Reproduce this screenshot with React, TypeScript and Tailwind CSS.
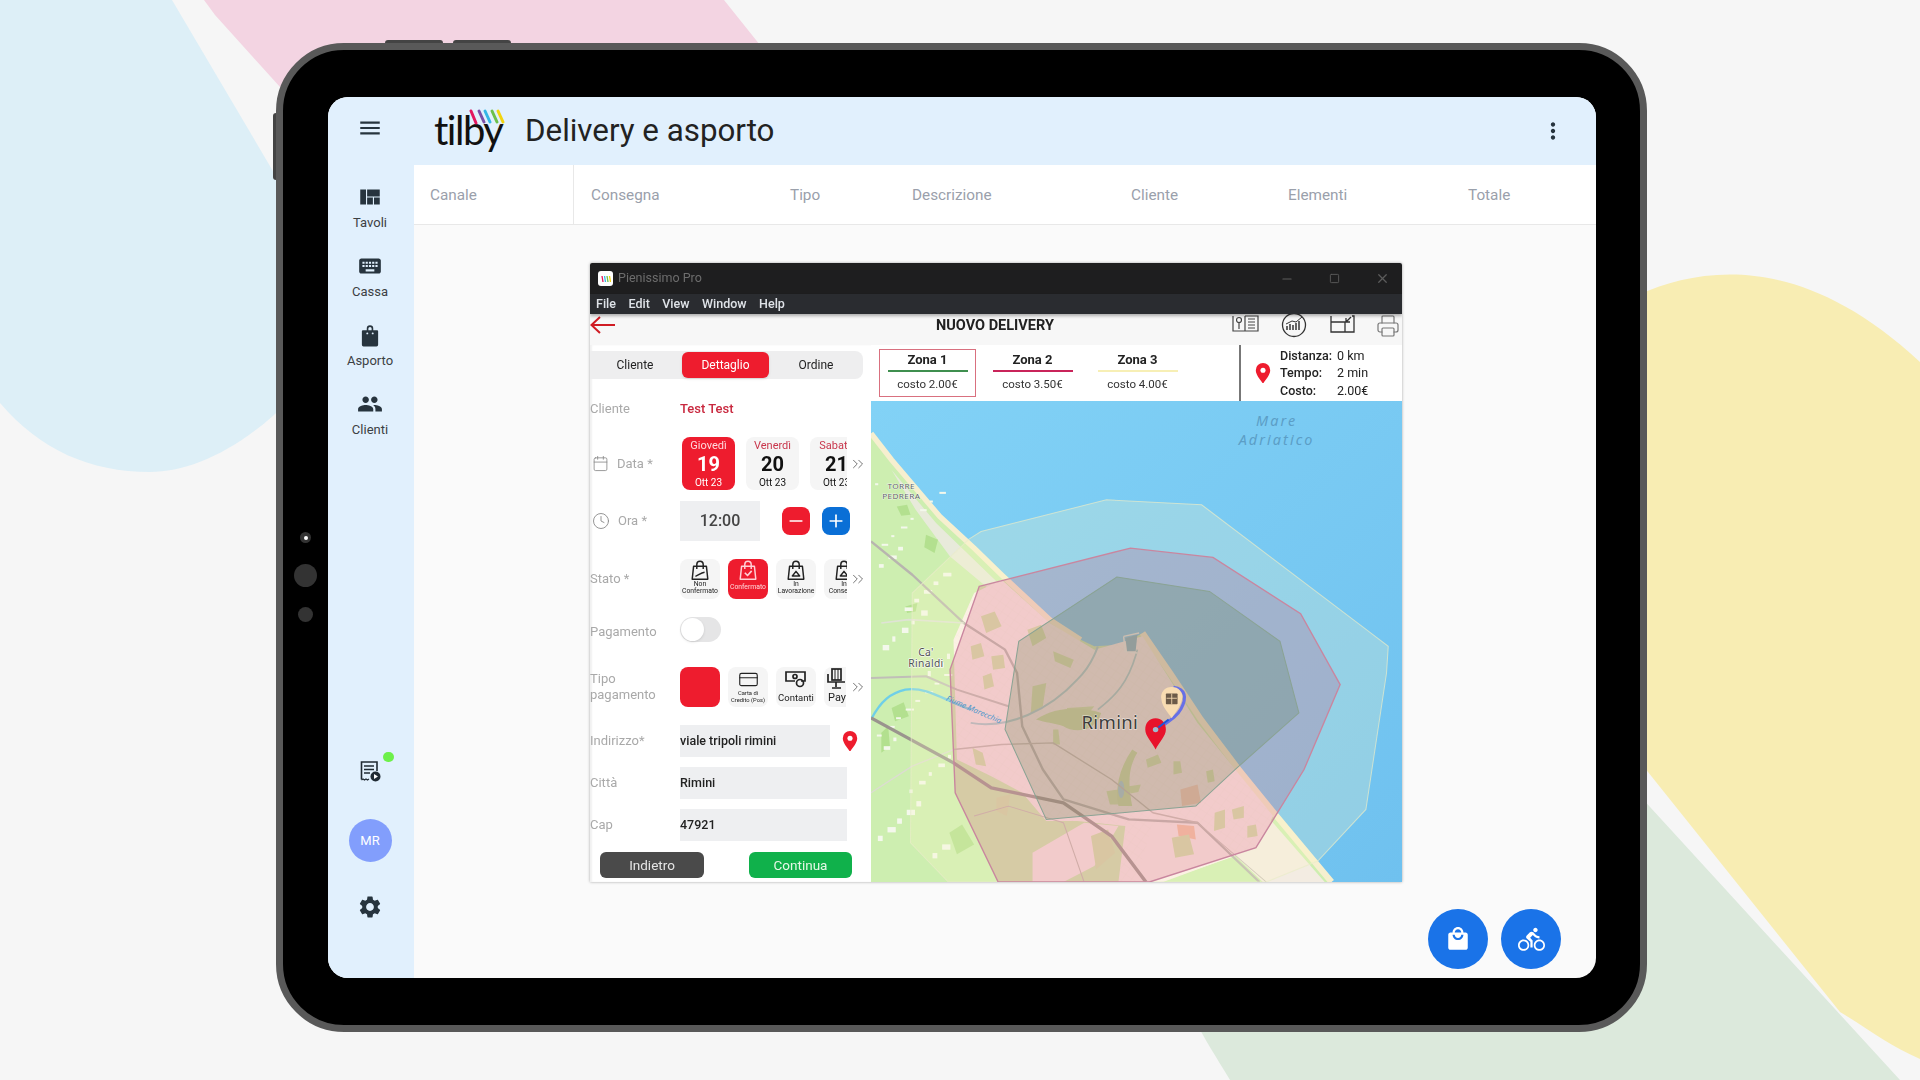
// App.tsx
import { Calendar, Clock, ChevronsRight, CreditCard, Printer, Minus, Plus, X, Square } from 'lucide-react'
import { MdMenu, MdMoreVert, MdViewQuilt, MdKeyboard, MdPeople, MdSettings, MdLocalMall, MdDirectionsBike } from 'react-icons/md'

const columns = [
  { label: 'Consegna', width: 'w-[216px]', pad: 'pl-[17px]' },
  { label: 'Tipo', width: 'w-[122px]', pad: '' },
  { label: 'Descrizione', width: 'w-[219px]', pad: '' },
  { label: 'Cliente', width: 'w-[157px]', pad: '' },
  { label: 'Elementi', width: 'w-[180px]', pad: '' },
  { label: 'Totale', width: 'w-[128px]', pad: '' }
]

const dates = [
  { day: 'Giovedì', num: '19', active: true },
  { day: 'Venerdì', num: '20', active: false },
  { day: 'Sabato', num: '21', active: false }
]

const zones = [
  { name: 'Zona 1', cost: 'costo 2.00€', line: 'bg-[#3f8f4f]', box: 'border-[#d9707f]' },
  { name: 'Zona 2', cost: 'costo 3.50€', line: 'bg-[#c9245a]', box: 'border-transparent' },
  { name: 'Zona 3', cost: 'costo 4.00€', line: 'bg-[#f7efb5]', box: 'border-transparent' }
]

const urbanPatches = [
  '320,470 360,455 380,500 335,520',
  '290,560 320,550 330,590 295,600',
  '350,590 385,585 390,625 355,630',
  '455,510 495,495 510,535 470,560',
  '470,680 510,670 500,740 465,760',
  '530,575 590,600 580,625 535,605',
  '570,745 650,740 630,765 575,775',
  '325,650 350,640 358,680 330,690',
  '530,810 545,810 550,855 530,855',
  '800,900 835,885 845,910 805,925',
  '880,905 900,905 905,940 880,945',
  '975,935 995,930 1000,965 980,970',
  '685,995 720,990 735,1035 695,1035',
  '750,980 785,975 778,998 755,1002',
  '1000,1060 1030,1050 1030,1105 998,1115',
  '1050,1050 1085,1040 1085,1075 1055,1080',
  '1095,1100 1120,1095 1125,1130 1095,1135',
  '640,1130 690,1110 710,1180 655,1230',
  '875,1135 925,1125 940,1185 885,1195',
  '365,1015 405,1005 395,1070 365,1055',
  '295,865 325,880 335,920 305,915'
]

// scattered built-up specks on the countryside west of the city
const specks = Array.from({ length: 46 }, (_, i) => ({
  x: 12 + ((i * 67) % 215),
  y: 70 + ((i * 191) % 1120),
  w: 9 + (i % 4) * 5,
  h: 6 + (i % 3) * 5
}))

const fieldPatches = [
  '160,225 195,240 185,280 155,262',
  '75,140 105,135 115,165 88,168',
  '228,1120 265,1095 300,1155 250,1185',
  '60,745 95,728 110,770 70,785',
  '30,820 50,800 55,860 30,880',
  '100,440 135,430 130,455 105,460'
]

function TilbyLogo() {
  return (
    <div className="relative h-[56px] w-[70px]">
      <span className="absolute left-0 top-[2px] font-['Lato',sans-serif] text-[40px] leading-[50px] tracking-[-1.5px] text-[#111]">tilby</span>
      <svg className="absolute left-[35px] top-[6px]" width="36" height="16" viewBox="0 0 36 16" strokeWidth="3" strokeLinecap="round">
        <path d="M2 2l5 12" stroke="#e3175f" />
        <path d="M10 2l5 11" stroke="#7a4fa8" />
        <path d="M16 2l5 11" stroke="#35b6e6" />
        <path d="M23 2l5 11" stroke="#6cc04a" />
        <path d="M29 2l5 11" stroke="#f2d40f" />
      </svg>
    </div>
  )
}

function TakeawayIcon() {
  return (
    <svg width="28" height="28" viewBox="0 0 24 24" fill="#27343e">
      <path d="M5.500 7.500H9V6a3 3 0 0 1 6 0v1.500h3.500a1 1 0 0 1 1 1V21a1.500 1.500 0 0 1-1.500 1.500H6A1.500 1.500 0 0 1 4.500 21V8.500a1 1 0 0 1 1-1zM10.500 7.500h3V6a1.500 1.500 0 0 0-3 0z" fillRule="evenodd" />
      <circle cx="9.500" cy="10.500" r="0.900" fill="#e1f0fd" />
      <circle cx="14.500" cy="10.500" r="0.900" fill="#e1f0fd" />
    </svg>
  )
}

function ReceiptPlayIcon() {
  return (
    <svg width="24" height="24" viewBox="0 0 24 24" fill="none" stroke="#1f2a33" strokeWidth="1.600">
      <path d="M3.500 20.500V3h15.500v9" />
      <path d="M3.500 21l1.500-1 1.500 1 1.500-1 1.500 1 1.500-1" strokeWidth="1.200" />
      <path d="M6 7h10M6 10.500h10M6 14h6" />
      <circle cx="17.500" cy="17.500" r="5" fill="#1f2a33" stroke="none" />
      <path d="M16 15l4 2.500-4 2.500z" fill="#fff" stroke="none" />
    </svg>
  )
}

function BagIcon({ color = '#222', mark }: { color?: string; mark: 'swoosh' | 'check' | 'home' }) {
  return (
    <svg width="22" height="22" viewBox="0 0 24 24" fill="none" stroke={color} strokeWidth="1.600" strokeLinejoin="round">
      <path d="M5 8h14l1.500 14h-17z" />
      <path d="M8.500 11V6a3.500 3.500 0 0 1 7 0v5" />
      {mark === 'swoosh' && <path d="M7 19c3-1 6-4 10-4.500" />}
      {mark === 'check' && <path d="M8.500 15l3 3 4.500-5" strokeWidth="1.800" />}
      {mark === 'home' && <path d="M8 18.500h8l-4-5z" />}
    </svg>
  )
}

function CashIcon() {
  return (
    <svg width="24" height="18" viewBox="0 0 24 18" fill="none" stroke="#222" strokeWidth="1.700">
      <path d="M17 11h4V2H2v9h9" />
      <circle cx="11" cy="6.500" r="2" />
      <circle cx="16" cy="13" r="3.500" />
    </svg>
  )
}

function PayIcon() {
  return (
    <svg width="20" height="22" viewBox="0 0 20 22" fill="none" stroke="#222" strokeWidth="1.700">
      <rect x="6" y="1" width="9" height="11" />
      <path d="M9 1v11M12 1v11" strokeWidth="1" />
      <path d="M2 6v8h17M10 14v5M6 20h9" />
    </svg>
  )
}

function RedPin({ size = 20 }: { size?: number }) {
  return (
    <svg width={size} height={size * 1.3} viewBox="0 0 20 26">
      <path d="M10 0a9 9 0 0 1 9 9c0 6-6 12-9 17-3-5-9-11-9-17a9 9 0 0 1 9-9z" fill="#ee1c2e" />
      <circle cx="10" cy="9" r="3.200" fill="#fff" />
    </svg>
  )
}

function MapView() {
  return (
    <svg className="block" width="531" height="481" viewBox="0 -177 1545 1445" preserveAspectRatio="none">
      <defs>
        <linearGradient id="sea" x1="0" y1="0" x2="1" y2="1">
          <stop offset="0" stopColor="#82d2f6" />
          <stop offset="1" stopColor="#6fc1ef" />
        </linearGradient>
        <pattern id="streets" width="22" height="22" patternUnits="userSpaceOnUse" patternTransform="rotate(35)">
          <path d="M0 0H22M0 0V22" stroke="#b9a3a3" strokeWidth="1" opacity="0.250" />
        </pattern>
      </defs>
      <rect x="0" y="-177" width="1545" height="1445" fill="url(#sea)" />
      {/* land */}
      <polygon points="0,-80 60,0 200,170 300,265 380,345 520,480 610,540 650,560 730,555 790,520 870,640 960,780 1070,930 1180,1070 1340,1268 0,1268" fill="#cdeeb0" />
      <polyline points="0,-80 60,0 200,170 300,265 380,345 520,480 610,540" fill="none" stroke="#f6efcf" strokeWidth="16" />
      <polyline points="790,520 870,640 960,780 1070,930 1180,1070 1340,1268" fill="none" stroke="#f6efcf" strokeWidth="18" />
      <polygon points="60,30 190,190 290,290 370,370 340,385 230,290 130,150" fill="#e8eadb" />
      <polygon points="1060,960 1320,1268 1140,1268 1000,1130 960,1040" fill="#f3ece2" />
      {fieldPatches.map((p) => <polygon key={p} points={p} fill="#b3e08f" />)}
      {specks.map((s) => <rect key={`${s.x}-${s.y}`} x={s.x} y={s.y} width={s.w} height={s.h} fill="#f4f8ec" />)}
      {/* urban area */}
      <polygon points="240,540 300,400 380,360 520,490 650,570 790,530 950,790 1170,1070 1120,1165 850,1268 720,1268 740,1100 600,1085 510,1085 440,1000 350,950 250,900" fill="#fbf0ee" />
      <polygon points="240,540 300,400 380,360 520,490 650,570 790,530 950,790 1170,1070 1120,1165 850,1268 720,1268 740,1100 600,1085 510,1085 440,1000 350,950 250,900" fill="url(#streets)" />
      <polygon points="470,1180 620,1090 720,1100 650,1220 560,1268 470,1268" fill="#fbf0ee" />
      <polygon points="820,1090 1000,1110 1060,1190 840,1268 770,1268" fill="#fbf0ee" />
      <polygon points="900,990 950,975 960,1030 905,1040" fill="#f8cdb8" />
      <polygon points="890,1095 940,1100 945,1140 895,1130" fill="#f8c4a5" />
      {urbanPatches.map((p) => <polygon key={p} points={p} fill="#d3e6ab" />)}
      <path d="M480 780c60-40 130-40 190-20-20 60-80 60-110 40-30-10-50-10-80-20z" fill="#cbe2a2" />
      <path d="M720 1040c-10-50 0-110 40-170l15 10c-30 50-25 100-15 160z" fill="#cbe2a2" />
      {/* water and roads */}
      <path d="M0 780C30 720 60 700 100 690c60-10 110 30 190 60" fill="none" stroke="#6fcfe8" strokeWidth="7" />
      <path d="M290 790C400 810 520 750 600 660c30-30 50-70 60-100" fill="none" stroke="#a7cfd1" strokeWidth="6" />
      <path d="M660 750c50-40 90-80 115-180" fill="none" stroke="#a7cfd1" strokeWidth="5" />
      <path d="M735 530l45-10M735 530l5 45 35 5" fill="none" stroke="#f2f6f2" strokeWidth="4" />
      <polygon points="740,535 775,525 770,575 745,575" fill="#7fb5c7" />
      <ellipse cx="728" cy="990" rx="9" ry="26" fill="#a6d2de" />
      <g fill="none" strokeLinejoin="round">
        <polyline points="0,245 120,345 270,490 390,570 425,640 440,800 500,930 560,1020 750,1080 950,1090 1130,1268" strokeWidth="7" stroke="#b8b5af" />
        <polyline points="0,655 160,650 250,690 400,740" strokeWidth="6" stroke="#c0beb8" />
        <polyline points="240,870 380,855 530,850 700,960 820,1060 950,1090" strokeWidth="4" stroke="#c4bcb4" />
        <polyline points="0,1000 120,920 240,870" strokeWidth="4" stroke="#dcdcd2" />
        <polyline points="30,490 110,480 270,490" strokeWidth="5" stroke="#dfe3d5" />
        <polyline points="300,1070 400,1040 560,1090 620,1268" strokeWidth="3" stroke="#c4bcb4" />
        <polyline points="950,1090 1150,1268" strokeWidth="3" stroke="#c4bcb4" />
        <polyline points="0,775 240,910 350,985 560,1030 700,1130 800,1268" strokeWidth="10" stroke="#9a948e" />
      </g>
      {/* delivery zones */}
      <polygon points="285,238 320,215 685,120 962,135 1505,560 1500,640 1440,1050 1300,1205 1150,1268 225,1268 115,1150 120,400" fill="#fdf7c6" fillOpacity="0.240" stroke="#e9edc9" strokeOpacity="0.700" strokeWidth="3" />
      <polygon points="315,380 755,265 995,293 1250,462 1365,675 1260,930 1120,1165 810,1268 370,1268 245,1000 230,630" fill="#cf3668" fillOpacity="0.200" stroke="#c9869f" strokeWidth="4" />
      <polygon points="715,352 985,395 1190,545 1245,760 1060,930 945,1040 510,1080 390,810 430,545" fill="#4a7a3c" fillOpacity="0.200" stroke="#8aa394" strokeWidth="3" />
      {/* labels */}
      <g fontFamily="'Noto Sans', sans-serif" textAnchor="middle">
        <text x="88" y="88" fontSize="24" fill="#5b5f5f" stroke="#fff" strokeWidth="2" paintOrder="stroke" letterSpacing="1">TORRE</text>
        <text x="88" y="116" fontSize="24" fill="#5b5f5f" stroke="#fff" strokeWidth="2" paintOrder="stroke" letterSpacing="1">PEDRERA</text>
        <text x="160" y="590" fontSize="30" fill="#4d4f4f" stroke="#fff" strokeWidth="3" paintOrder="stroke" letterSpacing="1">Ca'</text>
        <text x="160" y="621" fontSize="30" fill="#4d4f4f" stroke="#fff" strokeWidth="3" paintOrder="stroke" letterSpacing="1">Rinaldi</text>
        <text x="695" y="808" fontSize="54" fill="#3d3d3d" stroke="#fff" strokeOpacity="0.500" strokeWidth="4" paintOrder="stroke" letterSpacing="1">Rimini</text>
        <text x="296" y="757" fontSize="23" fill="#4f97cc" fontStyle="italic" transform="rotate(24 296 757)">Fiume Marecchia</text>
        <text x="1180" y="-101" fontSize="42" fontStyle="italic" fill="#5c9ec6" letterSpacing="6">Mare</text>
        <text x="1180" y="-46" fontSize="42" fontStyle="italic" fill="#5c9ec6" letterSpacing="6">Adriatico</text>
      </g>
      {/* route and markers */}
      <path d="M880 683c35 5 40 30 22 65-10 20-25 30-75 66" fill="none" stroke="#6770e6" strokeWidth="9" />
      <path d="M875 682a30 30 0 0 1 30 38c-5 22-20 40-30 56-10-16-28-34-30-56a30 30 0 0 1 30-38z" fill="#f8dcb2" />
      <rect x="858" y="702" width="34" height="32" rx="2" fill="#6b5a48" />
      <path d="M860 716h30M875 702v32" stroke="#f8dcb2" strokeWidth="2.500" />
      <path d="M828 776c20 0 30 16 30 34 0 20-20 38-30 60-10-22-30-40-30-60 0-18 10-34 30-34z" fill="#e8132c" />
      <circle cx="828" cy="810" r="8" fill="#9dbcd0" />
      <path d="M836 804l30-24" stroke="#1e55d8" strokeWidth="6" />
    </svg>
  )
}

function FormRow({ label, icon, className, labelClass = '', children }: { label: string; icon?: React.ReactNode; className: string; labelClass?: string; children: React.ReactNode }) {
  return (
    <div className={`flex items-center ${className}`}>
      <div className={`flex w-[90px] shrink-0 items-center text-[13px] leading-[16px] text-[#a9a9a9] ${icon ? 'gap-[8px] pl-[2px]' : ''} ${labelClass}`}>
        {icon}
        <span>{label}</span>
      </div>
      {children}
    </div>
  )
}

function DeliveryWindow() {
  return (
    <div className="flex h-[619px] w-[812px] flex-col overflow-hidden rounded-t-[2px] bg-white font-['Roboto',sans-serif] shadow-[0_0_3px_rgba(0,0,0,0.35)] blur-[0.4px]">
      {/* title bar */}
      <div className="flex h-[31px] shrink-0 items-center justify-between bg-[#1e1e1f] pl-[8px] pr-[12px]">
        <div className="flex items-center gap-[5px]">
          <div className="flex h-[15px] w-[15px] items-center justify-center rounded-[3px] bg-white">
            <svg width="10" height="6" viewBox="0 0 10 6" strokeWidth="1.300">
              <path d="M1 0l1 6" stroke="#e3175f" />
              <path d="M3.500 0l1 6" stroke="#35b6e6" />
              <path d="M6 0l1 6" stroke="#6cc04a" />
              <path d="M8.500 0l1 6" stroke="#f2d40f" />
            </svg>
          </div>
          <span className="text-[12.500px] text-[#6d6d6d]">Pienissimo Pro</span>
        </div>
        <div className="flex items-center gap-[35px] text-[#5c5c5c]">
          <Minus size={14} />
          <Square size={11} />
          <X size={15} />
        </div>
      </div>
      {/* menu bar */}
      <div className="relative z-10 flex h-[20px] shrink-0 items-center gap-[12.500px] bg-[#2a2c30] pl-[6px] text-[12.500px] font-medium text-[#dfe3e8] shadow-[0_2px_3px_rgba(0,0,0,0.3)]">
        <span>File</span>
        <span>Edit</span>
        <span>View</span>
        <span>Window</span>
        <span>Help</span>
      </div>
      {/* page header */}
      <div className="relative flex h-[31px] shrink-0 items-start justify-between overflow-hidden bg-[#f7f7f7] pr-[2px]">
        <svg className="mt-[2px]" width="26" height="18" viewBox="0 0 26 18" fill="none" stroke="#d01c24" strokeWidth="2">
          <path d="M25 9H2M10 1L1.500 9l8.500 8" />
        </svg>
        <span className="absolute left-[320px] top-[1px] w-[170px] text-center text-[14.500px] font-bold text-[#222]">NUOVO DELIVERY</span>
        <div className="flex items-start gap-[20px]">
          <svg width="28" height="20" viewBox="0 0 28 20" fill="none" stroke="#444" strokeWidth="1.200">
            <path d="M1 2v15h12V2M13 2h13v15H13" />
            <path d="M16 5h7M16 8h7M16 11h7M16 14h7" strokeWidth="1" />
            <circle cx="7" cy="6" r="2.500" />
            <path d="M7 9v6" />
          </svg>
          <svg width="28" height="24" viewBox="0 0 28 24" fill="none" stroke="#333" strokeWidth="1.300">
            <circle cx="14" cy="11" r="11.500" />
            <path d="M7 16v-4M10 16v-6M13 16v-5M16 16V9M19 16V7" strokeWidth="1.500" />
            <path d="M6 10l6-3 4 1 6-5" strokeWidth="1" />
          </svg>
          <svg width="27" height="20" viewBox="0 0 27 20" fill="none" stroke="#333" strokeWidth="1.300" className="ml-[1px]">
            <path d="M2 8h14v10H2zM2 2v6M16 18h9V2h-2M22 3l-5 5M17 4v4h4" />
          </svg>
          <Printer size={24} strokeWidth={1.200} className="text-[#777]" />
        </div>
      </div>
      <div className="flex min-h-0 flex-1">
        {/* detail form */}
        <div className="w-[281px] shrink-0 shadow-[inset_2px_0_2px_rgba(0,0,0,0.06)]">
          <div className="mt-[6px] flex h-[28px] w-[273px] items-center rounded-r-lg bg-[#eeeeef] text-[12px] text-[#222]">
            <span className="w-[90px] text-center">Cliente</span>
            <span className="ml-[2px] flex h-[26px] w-[87px] items-center justify-center rounded-md bg-[#ee1c2e] text-white shadow-sm">Dettaglio</span>
            <span className="flex-1 text-center">Ordine</span>
          </div>
          <FormRow label="Cliente" className="mt-[20px] h-[20px]">
            <span className="text-[13px] font-medium text-[#c9293f]">Test Test</span>
          </FormRow>
          <FormRow label="Data *" icon={<Calendar size={17} strokeWidth={1.200} className="text-[#8a8a8a]" />} className="mt-[18px] h-[53px]">
            <div className="flex w-[167px] gap-[11px] overflow-hidden pl-[2px]">
              {dates.map((d) => (
                <div key={d.num} className={`flex h-[53px] w-[53px] shrink-0 flex-col items-center rounded-lg pt-[2px] ${d.active ? 'bg-[#ee1c2e] text-white' : 'bg-[#f5f5f5] text-[#111]'}`}>
                  <span className={`text-[11px] leading-[13px] ${d.active ? 'text-[#ffd9dc]' : 'text-[#c9364c]'}`}>{d.day}</span>
                  <span className="mt-[1px] text-[20px] font-bold leading-[23px]">{d.num}</span>
                  <span className="mt-[1px] text-[10px] leading-[12px]">Ott 23</span>
                </div>
              ))}
            </div>
            <ChevronsRight size={18} strokeWidth={1.200} className="ml-[2px] text-[#666]" />
          </FormRow>
          <FormRow label="Ora *" icon={<Clock size={18} strokeWidth={1.200} className="text-[#8a8a8a]" />} className="mt-[11px] h-[40px]">
            <div className="flex h-[40px] w-[80px] items-center justify-center bg-[#eeeff1] text-[16px] font-medium text-[#444]">12:00</div>
            <div className="ml-[22px] flex h-[28px] w-[28px] items-center justify-center rounded-lg bg-[#ee1c2e] text-white"><Minus size={20} strokeWidth={2} /></div>
            <div className="ml-[12px] flex h-[28px] w-[28px] items-center justify-center rounded-lg bg-[#0a6fd6] text-white"><Plus size={20} strokeWidth={2} /></div>
          </FormRow>
          <FormRow label="Stato *" className="mt-[18px] h-[40px]">
            <div className="flex w-[167px] gap-[8px] overflow-hidden">
              <div className="flex h-[40px] w-[40px] shrink-0 flex-col items-center rounded-lg bg-[#f5f5f5] text-center text-[6.800px] leading-[7px] text-[#222]">
                <BagIcon mark="swoosh" />
                <span>Non<br />Confermato</span>
              </div>
              <div className="flex h-[40px] w-[40px] shrink-0 flex-col items-center rounded-lg bg-[#ee1c2e] text-center text-[6.800px] leading-[7px] text-[#ffd9dc]">
                <BagIcon color="#ffd0d5" mark="check" />
                <span className="mt-[3px]">Confermato</span>
              </div>
              <div className="flex h-[40px] w-[40px] shrink-0 flex-col items-center rounded-lg bg-[#f5f5f5] text-center text-[6.800px] leading-[7px] text-[#222]">
                <BagIcon mark="home" />
                <span>In<br />Lavorazione</span>
              </div>
              <div className="flex h-[40px] w-[40px] shrink-0 flex-col items-center rounded-lg bg-[#f5f5f5] text-center text-[6.800px] leading-[7px] text-[#222]">
                <BagIcon mark="home" />
                <span>In<br />Consegna</span>
              </div>
            </div>
            <ChevronsRight size={18} strokeWidth={1.200} className="ml-[2px] text-[#666]" />
          </FormRow>
          <FormRow label="Pagamento" labelClass="mt-[5px]" className="mt-[18px] h-[25px]">
            <div className="flex h-[25px] w-[41px] items-center rounded-full bg-[#e5e5e6] pl-px">
              <div className="h-[23px] w-[23px] rounded-full bg-white shadow-sm" />
            </div>
          </FormRow>
          <FormRow label="Tipo pagamento" className="mt-[25px] h-[40px]">
            <div className="flex w-[167px] gap-[8px] overflow-hidden">
              <div className="h-[40px] w-[40px] shrink-0 rounded-lg bg-[#ee1c2e]" />
              <div className="flex h-[40px] w-[40px] shrink-0 flex-col items-center rounded-lg bg-[#f5f5f5] pt-[2px] text-center text-[5.800px] leading-[7px] text-[#222]">
                <CreditCard size={21} strokeWidth={1.300} />
                <span>Carta di<br />Credito (Pos)</span>
              </div>
              <div className="flex h-[40px] w-[40px] shrink-0 flex-col items-center rounded-lg bg-[#f5f5f5] pt-[3px] text-center text-[9.500px] leading-[13px] text-[#222]">
                <CashIcon />
                <span className="mt-[3px]">Contanti</span>
              </div>
              <div className="flex h-[40px] w-[22px] shrink-0 flex-col items-end overflow-hidden rounded-l-lg bg-[#f5f5f5] pt-[1px] text-[11px] leading-[13px] text-[#222]">
                <PayIcon />
                <span className="mt-[1px]">Pay</span>
              </div>
            </div>
            <ChevronsRight size={18} strokeWidth={1.200} className="ml-[2px] text-[#666]" />
          </FormRow>
          <FormRow label="Indirizzo*" className="mt-[18px] h-[32px]">
            <div className="flex h-[32px] w-[150px] items-center bg-[#eeeff1] text-[12.500px] font-medium text-[#222]">viale tripoli rimini</div>
            <div className="ml-[12px] flex"><RedPin size={16} /></div>
          </FormRow>
          <FormRow label="Città" className="mt-[10px] h-[32px]">
            <div className="flex h-[32px] w-[167px] items-center bg-[#eeeff1] text-[12.500px] font-medium text-[#222]">Rimini</div>
          </FormRow>
          <FormRow label="Cap" className="mt-[10px] h-[32px]">
            <div className="flex h-[32px] w-[167px] items-center bg-[#eeeff1] text-[12.500px] font-medium text-[#222]">47921</div>
          </FormRow>
          <div className="mt-[11px] flex pl-[10px]">
            <div className="flex h-[26px] w-[104px] items-center justify-center rounded-md bg-[#4a4a4a] text-[13.500px] text-[#e4e4e4]">Indietro</div>
            <div className="ml-[45px] flex h-[26px] w-[103px] items-center justify-center rounded-md bg-[#10b14b] text-[13.500px] text-[#e6f7e6]">Continua</div>
          </div>
        </div>
        {/* zones and map */}
        <div className="flex min-w-0 flex-1 flex-col">
          <div className="flex h-[56px] shrink-0 items-stretch">
            <div className="flex flex-1 gap-[8px] pl-[8px] pt-[4px]">
              {zones.map((z) => (
                <div key={z.name} className={`flex h-[48px] w-[97px] flex-col items-center border pt-[2px] ${z.box}`}>
                  <span className="text-[13px] font-bold leading-[16px] text-[#222]">{z.name}</span>
                  <div className={`mt-[2px] h-[2px] w-[80px] ${z.line}`} />
                  <span className="mt-[5px] text-[11.500px] leading-[14px] text-[#333]">{z.cost}</span>
                </div>
              ))}
            </div>
            <div className="flex w-[163px] items-center border-l-2 border-[#777] pl-[14px]">
              <RedPin size={16} />
              <div className="ml-[9px] grid grid-cols-[57px_auto] text-[12.500px] leading-[17.500px] text-[#222]">
                <span className="font-medium">Distanza:</span><span>0 km</span>
                <span className="font-medium">Tempo:</span><span>2 min</span>
                <span className="font-medium">Costo:</span><span>2.00€</span>
              </div>
            </div>
          </div>
          <MapView />
        </div>
      </div>
    </div>
  )
}

export default function App() {
  return (
    <div className="relative h-[1080px] w-[1920px] overflow-hidden bg-[#f6f6f6] pl-[276px] pt-[43px] font-['Roboto',sans-serif]">
      {/* background shapes */}
      <svg className="absolute left-0 top-0" width="1920" height="1080" viewBox="0 0 1920 1080">
        <path d="M0 0H172L290 200V400C240 450 190 472 150 472 90 472 40 450 0 403z" fill="#ddeff7" />
        <path d="M204 0H724L780 70H300L280 87 215 15z" fill="#f3d4e2" />
        <path d="M1640 294C1700 268 1800 250 1920 362V1059C1890 1046 1870 1030 1840 1012L1640 762z" fill="#f8edb3" />
        <path d="M1640 796L1900 1080H1230C1215 1055 1205 1040 1195 1020z" fill="#dce9dc" />
      </svg>

      <div className="relative flex h-[989px] w-[1371px] flex-col rounded-[68px] border-[7px] border-[#595959] bg-black pb-[47px] pl-[45px] pr-[44px] pt-[47px]">
        {/* hardware buttons */}
        <div className="absolute left-[102px] top-[-10px] h-[3px] w-[58px] rounded-t bg-[#444]" />
        <div className="absolute left-[170px] top-[-10px] h-[3px] w-[58px] rounded-t bg-[#444]" />
        <div className="absolute left-[-10px] top-[63px] h-[67px] w-[3px] rounded-l bg-[#444]" />
        <div className="absolute left-[17px] top-[482px] flex h-[11px] w-[11px] items-center justify-center rounded-full bg-[#333]">
          <div className="h-[4px] w-[4px] rounded-full bg-white" />
        </div>
        <div className="absolute left-[11px] top-[514px] h-[23px] w-[23px] rounded-full bg-[#333]" />
        <div className="absolute left-[15px] top-[557px] h-[15px] w-[15px] rounded-full bg-[#333]" />

        {/* screen */}
        <div className="relative flex min-h-0 flex-1 flex-col overflow-hidden rounded-[20px] bg-[#fafafa]">
          <header className="flex h-[68px] shrink-0 items-center bg-[#e1f0fd] pr-[30px]">
            <div className="flex w-[84px] justify-center pb-[6px] text-[#27343e]"><MdMenu size={26} /></div>
            <div className="ml-[22px]"><TilbyLogo /></div>
            <h1 className="ml-[21px] text-[31.300px] font-normal leading-[40px] text-[#222]">Delivery e asporto</h1>
            <MdMoreVert size={26} className="ml-auto text-[#27343e]" />
          </header>
          <div className="flex min-h-0 flex-1">
            <aside className="flex w-[86px] shrink-0 flex-col items-center bg-[#e1f0fd] pb-[58px] pr-[2px] pt-[19px] text-[13px] text-[#3c4043]">
              <nav className="flex flex-col items-center gap-[22px]">
                <div className="flex flex-col items-center gap-[5px]"><MdViewQuilt size={26} className="text-[#27343e]" /><span className="leading-[16px]">Tavoli</span></div>
                <div className="flex flex-col items-center gap-[5px]"><MdKeyboard size={26} className="text-[#27343e]" /><span className="leading-[16px]">Cassa</span></div>
                <div className="flex flex-col items-center gap-[5px]"><div className="flex h-[26px] w-[26px] items-center justify-center"><TakeawayIcon /></div><span className="leading-[16px]">Asporto</span></div>
                <div className="flex flex-col items-center gap-[5px]"><MdPeople size={26} className="text-[#27343e]" /><span className="leading-[16px]">Clienti</span></div>
              </nav>
              <div className="mt-auto flex flex-col items-center">
                <div className="relative">
                  <ReceiptPlayIcon />
                  <div className="absolute right-[-12px] top-[-7px] h-[10px] w-[11px] rounded-full bg-[#6df04a]" />
                </div>
                <div className="mt-[36px] flex h-[43px] w-[43px] items-center justify-center rounded-full bg-[#829efc] text-[13px] text-white">MR</div>
                <MdSettings size={26} className="mt-[32px] text-[#27343e]" />
              </div>
            </aside>
            <main className="flex min-w-0 flex-1 flex-col">
              <div className="flex h-[60px] shrink-0 items-center border-b border-[#e8e8e8] bg-white text-[15.300px] text-[#9aa0ab]">
                <div className="flex h-full w-[160px] items-center border-r border-[#e8e8e8] pl-[16px] pt-[1px]">Canale</div>
                {columns.map((c) => (
                  <div key={c.label} className={`${c.width} ${c.pad} pt-[1px]`}>{c.label}</div>
                ))}
              </div>
              <div className="pl-[176px] pt-[38px]">
                <DeliveryWindow />
              </div>
            </main>
          </div>
          <div className="absolute bottom-[9px] right-[35px] flex gap-[13px]">
            <div className="flex h-[60px] w-[60px] items-center justify-center rounded-full bg-[#1a73e8] text-white"><MdLocalMall size={26} /></div>
            <div className="flex h-[60px] w-[60px] items-center justify-center rounded-full bg-[#1a73e8] text-white"><MdDirectionsBike size={27} /></div>
          </div>
        </div>
      </div>
    </div>
  )
}
